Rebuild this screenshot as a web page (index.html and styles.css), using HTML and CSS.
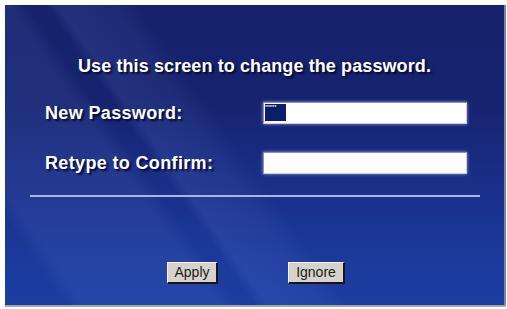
FILE: index.html
```html
<!DOCTYPE html>
<html>
<head>
<meta charset="utf-8">
<link rel="stylesheet" href="styles.css">
</head>
<body>
<div class="panel">
  <div class="title">Use this screen to change the password.</div>
  <div class="form">
    <div class="label">New Password:</div>
    <div class="field"><span class="sel">******</span></div>
    <div class="label">Retype to Confirm:</div>
    <div class="field"></div>
  </div>
  <div class="rule"></div>
  <div class="buttons">
    <div class="btn">Apply</div>
    <div class="btn">Ignore</div>
  </div>
</div>
</body>
</html>
```
FILE: styles.css
```css
html, body {
  margin: 0;
  padding: 0;
  background: #ffffff;
  width: 507px;
  height: 309px;
  overflow: hidden;
}
.panel {
  margin: 5px 0 0 5px;
  width: 499px;
  height: 300px;
  border-right: 2px solid #7a84a8;
  box-shadow: 0 2px 0 #a6a89a;
  display: flex;
  flex-direction: column;
  font-family: "Liberation Sans", Arial, sans-serif;
  color: #ffffff;
  background:
    linear-gradient(55deg, rgba(255,255,255,0) 0px, rgba(255,255,255,0) 50px, rgba(120,150,230,0.10) 65px, rgba(120,150,230,0.10) 175px, rgba(255,255,255,0) 190px, rgba(255,255,255,0) 205px, rgba(120,150,230,0.13) 215px, rgba(120,150,230,0.08) 260px, rgba(255,255,255,0) 280px),
    linear-gradient(180deg, #16226c 0%, #16236e 30%, #1a2f88 60%, #1b3a9c 85%, #1c3da2 100%);
}
.title {
  margin-top: 51px;
  height: 21px;
  line-height: 21px;
  text-align: center;
  font-size: 18px;
  letter-spacing: 0.1px;
  font-weight: bold;
  text-shadow: 2px 2px 2px #050a30;
}
.form {
  margin-top: 25px;
  margin-left: 40px;
  display: grid;
  grid-template-columns: 218px 204px;
  grid-auto-rows: 22px;
  row-gap: 28px;
  align-items: center;
}
.label {
  font-size: 18px;
  letter-spacing: 0.35px;
  font-weight: bold;
  text-shadow: 2px 2px 2px #050a30;
  padding-top: 1px;
}
.field {
  height: 22px;
  box-sizing: border-box;
  background: #ffffff;
  border: 1px solid #c8cde0;
  border-top-color: #8890b0;
  border-left-color: #8890b0;
  box-shadow: 0 0 3px rgba(200,215,255,0.7);
  padding: 1px 0 0 1px;
}
.sel {
  display: block;
  width: 21px;
  height: 17px;
  background: #0b1e6a;
  color: #ffffff;
  font-size: 6px;
  line-height: 7px;
  letter-spacing: -0.5px;
  overflow: hidden;
}
.rule {
  margin: 21px 0 0 25px;
  width: 450px;
  height: 2px;
  background: #a9b6d8;
}
.buttons {
  margin-top: 65px;
  margin-left: 162px;
  display: flex;
  gap: 70px;
}
.btn {
  height: 22px;
  box-sizing: border-box;
  background: #d6d3cc;
  border: 1px solid #f4f2ee;
  border-right: 2px solid #15151a;
  border-bottom: 2px solid #15151a;
  color: #1a1a1a;
  font-size: 14px;
  line-height: 19px;
  text-align: center;
  font-family: "Liberation Sans", Arial, sans-serif;
}
.btn:first-child { width: 51px; }
.btn:last-child { width: 57px; }
```
